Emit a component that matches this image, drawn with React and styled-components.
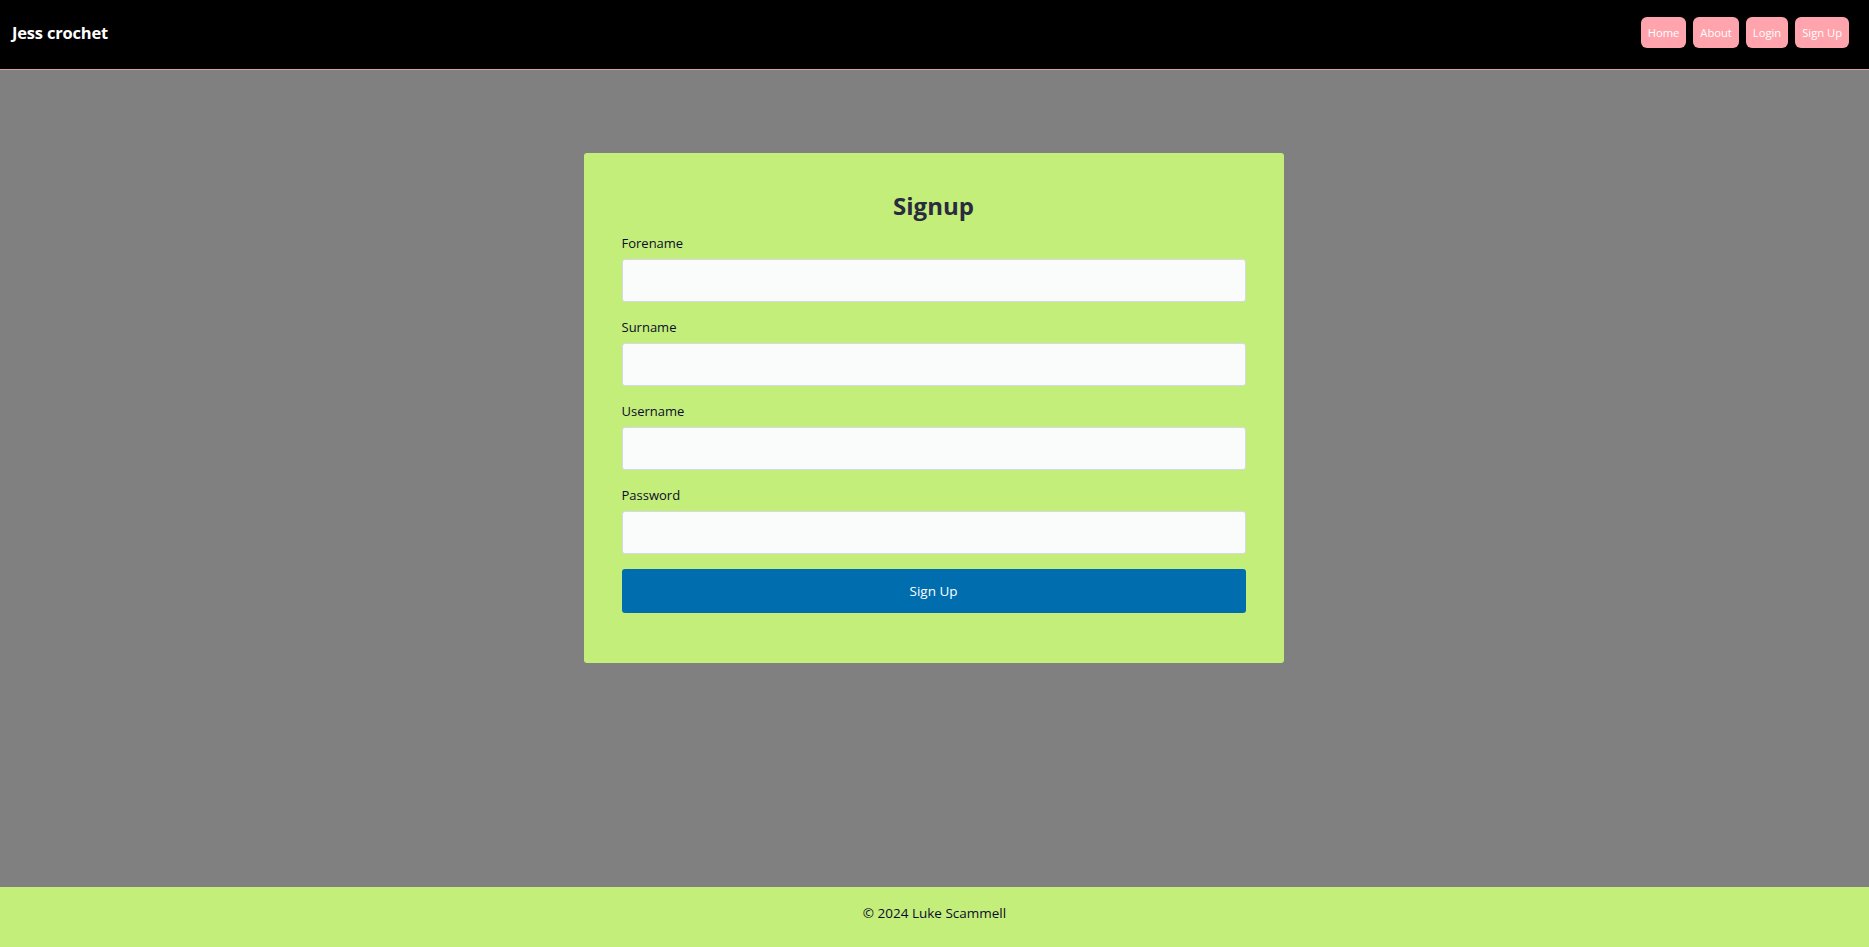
import React from 'react';
import styled, { createGlobalStyle } from 'styled-components';

const GlobalStyle = createGlobalStyle`
  html, body {
    margin: 0;
    padding: 0;
  }
  body {
    font-family: "Open Sans", "Noto Sans", sans-serif;
    background-color: #808080;
  }
  * {
    box-sizing: border-box;
  }
`;

const Page = styled.div`
  display: flex;
  flex-direction: column;
  min-height: 100vh;
`;

const HeaderBar = styled.header`
  display: flex;
  justify-content: space-between;
  align-items: center;
  height: 70px;
  padding: 0 20px 4px 12px;
  background-color: #000;
  border-bottom: 1px solid #d9a0a4;
  box-shadow: 0 1px 0 #1b7b7b;
`;

const Brand = styled.p`
  margin: 0;
  color: #fff;
  font-size: 16.5px;
  font-weight: 700;
  letter-spacing: -0.2px;
`;

const Nav = styled.nav`
  display: flex;
  gap: 7px;
`;

const NavItem = styled.a`
  display: flex;
  align-items: center;
  height: 31px;
  padding: 0 7px;
  border-radius: 6px;
  background-color: #ffa4ac;
  color: #fff;
  font-size: 11.2px;
  text-decoration: none;
  cursor: pointer;
`;

const Main = styled.main`
  flex: 1;
  display: flex;
  justify-content: center;
  align-items: flex-start;
  padding-top: 83px;
  background-color: #808080;
`;

const Card = styled.form`
  width: 700px;
  padding: 37px 38px 50px 38px;
  margin-right: 2px;
  background-color: #c3ee7a;
  border-radius: 3px;
  display: flex;
  flex-direction: column;
`;

const Title = styled.h2`
  margin: 0 0 12px;
  text-align: center;
  color: #2a2b3f;
  font-size: 24px;
  line-height: 31px;
  font-weight: 700;
`;

const Field = styled.div`
  display: flex;
  flex-direction: column;
  margin-bottom: 15px;
`;

const Label = styled.label`
  color: #0c0c2a;
  font-size: 13px;
  line-height: 20px;
  margin-bottom: 6px;
`;

const Input = styled.input`
  height: 43px;
  border: 1px solid #d6d8e6;
  border-radius: 3px;
  background-color: #fafcfb;
  padding: 0 12px;
  font-family: inherit;
  font-size: 13px;
  outline: none;
`;

const SubmitButton = styled.button`
  height: 44px;
  border: none;
  border-radius: 3px;
  background-color: #006eae;
  color: #fff;
  font-family: inherit;
  font-size: 13.5px;
  cursor: pointer;
`;

const Footer = styled.footer`
  height: 60px;
  display: flex;
  justify-content: center;
  align-items: center;
  padding-bottom: 8px;
  background-color: #c3ee7a;
  color: #0c0c2a;
  font-size: 13.5px;
`;

const fields = ['Forename', 'Surname', 'Username', 'Password'];

const App = () => {
  return (
    <>
      <GlobalStyle />
      <Page>
        <HeaderBar>
          <Brand>Jess crochet</Brand>
          <Nav>
            <NavItem>Home</NavItem>
            <NavItem>About</NavItem>
            <NavItem>Login</NavItem>
            <NavItem>Sign Up</NavItem>
          </Nav>
        </HeaderBar>
        <Main>
          <Card onSubmit={(e) => e.preventDefault()}>
            <Title>Signup</Title>
            {fields.map((name) => (
              <Field key={name}>
                <Label htmlFor={name.toLowerCase()}>{name}</Label>
                <Input
                  id={name.toLowerCase()}
                  type={name === 'Password' ? 'password' : 'text'}
                />
              </Field>
            ))}
            <SubmitButton type="submit">Sign Up</SubmitButton>
          </Card>
        </Main>
        <Footer>© 2024 Luke Scammell</Footer>
      </Page>
    </>
  );
};

export default App;
